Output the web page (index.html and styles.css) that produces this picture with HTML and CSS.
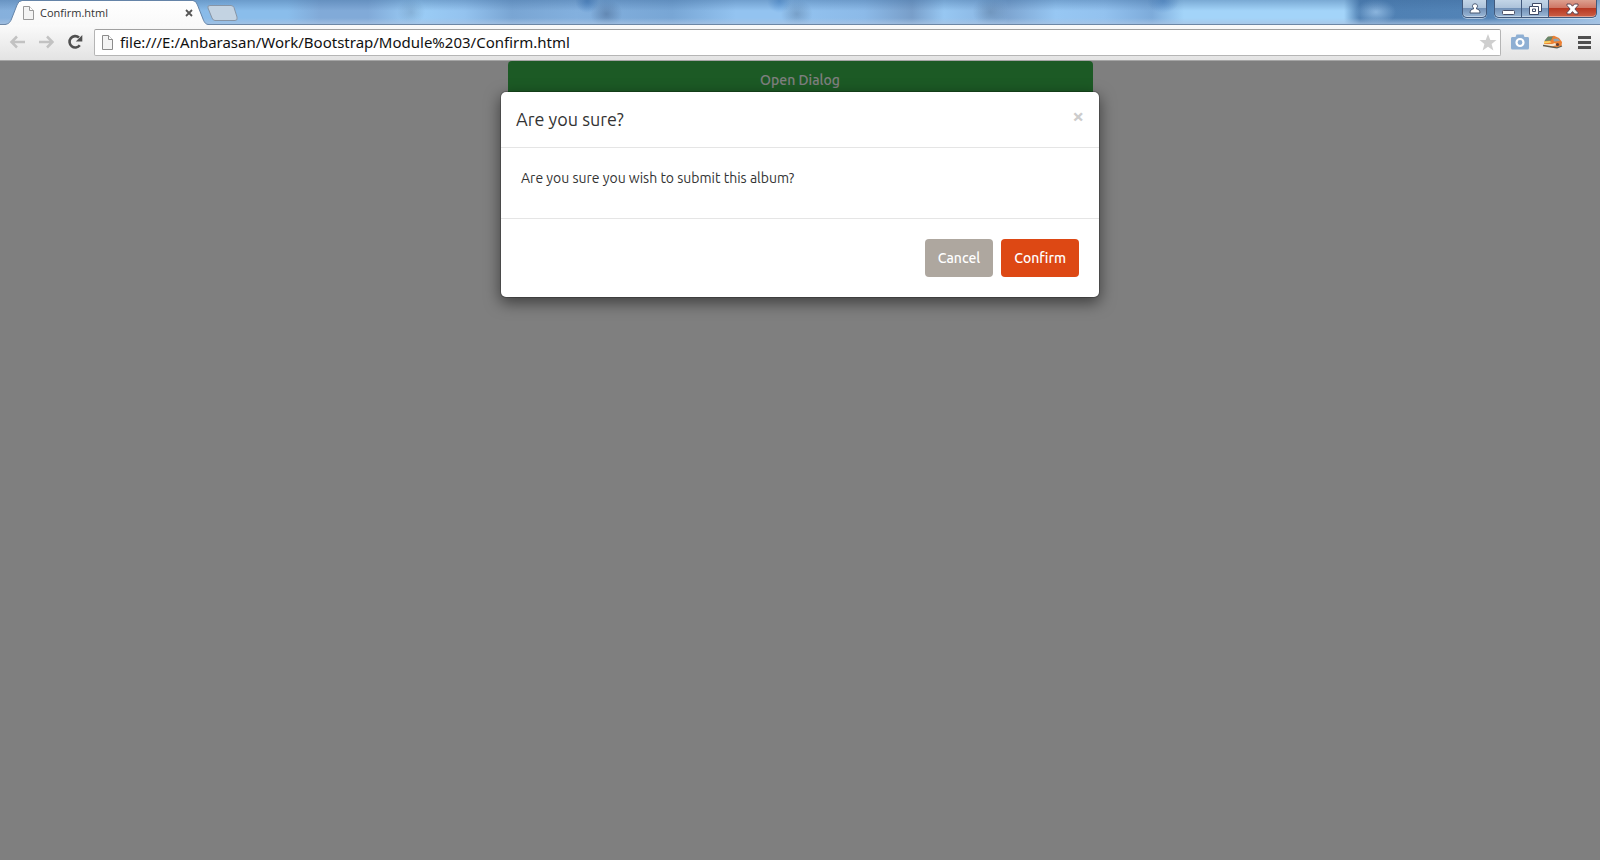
FILE: index.html
```html
<!DOCTYPE html>
<html lang="en">
<head>
<meta charset="utf-8">
<title>Confirm.html</title>
<link rel="stylesheet" href="styles.css">
</head>
<body>
<header class="browser">
  <div class="titlebar">
    <div class="tab">
      <svg class="tab-shape" viewBox="0 0 204 25" aria-hidden="true">
        <defs><linearGradient id="tabfill" x1="0" y1="0" x2="0" y2="1"><stop offset="0" stop-color="#fff"/><stop offset="1" stop-color="#f9f9f9"/></linearGradient></defs>
        <path d="M0 25 V24.500 C3 24 5 23 6.500 19 L12 5 Q13.500 1 17 1 H188 Q191 1 192.500 5 L198 19 C199.500 23 201 24.500 204 24.500 V25Z" fill="url(#tabfill)"/>
        <path d="M0 24.500 C3 24 5 23 6.500 19 L12 5 Q13.500 .5 17 .5 H188 Q191 .5 192.500 5 L198 19 C199.500 23 201 24.500 204 24.500" fill="none" stroke="#6584a8"/>
      </svg>
      <svg class="file-icon" width="11" height="14" viewBox="0 0 11 14" aria-hidden="true"><path d="M.5.500H6.500L10.500 4.500V13.500H.5Z" fill="#f4f4f4" stroke="#999"/><path d="M6.500.500V4.500H10.500" fill="#fff" stroke="#999"/></svg>
      <span class="tab-title">Confirm.html</span>
      <button class="tab-close" type="button" aria-label="Close tab"><svg width="8" height="8" viewBox="0 0 8 8"><path d="M1 1L7 7M7 1L1 7" stroke="#555" stroke-width="1.800"/></svg></button>
    </div>
    <button class="new-tab" type="button" aria-label="New tab"><svg width="31" height="16" viewBox="0 0 31 16"><path d="M3 .5H24Q26 .5 27 2.500L30 12Q31 15.500 28 15.500H8Q6 15.500 5 13L1 3Q0 .5 3 .5Z" fill="#c3d3e2" stroke="#8795a6"/></svg></button>
    <div class="window-controls">
      <button class="win-btn win-user" type="button" aria-label="User"><svg width="12" height="11" viewBox="0 0 12 11"><path d="M6 .8a2.300 2.300 0 0 1 1.500 4.200V6C9.500 6.200 11 7 11 10H1C1 7 2.500 6.200 4.500 6V5A2.300 2.300 0 0 1 6 .8Z" fill="#fff" stroke="#4a5a74"/></svg></button>
      <div class="win-group">
        <button class="win-btn win-min" type="button" aria-label="Minimize"><svg width="13" height="12" viewBox="0 0 13 12"><rect x=".5" y="7.500" width="12" height="4" rx="1" fill="#fff" stroke="#4a5068"/></svg></button>
        <button class="win-btn win-max" type="button" aria-label="Restore"><svg width="13" height="12" viewBox="0 0 13 12"><path d="M3.500.500H12.500V8.500H9.500V11.500H.5V3.500H3.500Z" fill="#fff" stroke="#3f4a66"/><path d="M3.500 3.500H9.500V8.500M3.500 6H6.500V8.500H3.500Z" fill="none" stroke="#3f4a66"/></svg></button>
        <button class="win-btn win-close" type="button" aria-label="Close"><svg width="13" height="12" viewBox="0 0 13 12"><path d="M1 1H4.500L6.500 3.200L8.500 1H12V2.500L8.900 6L12 9.500V11H8.500L6.500 8.600L4.500 11H1V9.500L4.100 6L1 2.500Z" fill="#fff" stroke="#5d4552"/></svg></button>
      </div>
    </div>
  </div>
  <div class="toolbar">
    <button class="nav-btn" type="button" aria-label="Back"><svg width="16" height="14" viewBox="0 0 16 14"><path d="M16 7H2.500M8 1.500L2.500 7L8 12.500" fill="none" stroke="#c2c2c2" stroke-width="2.500"/></svg></button>
    <button class="nav-btn" type="button" aria-label="Forward"><svg width="16" height="14" viewBox="0 0 16 14"><path d="M1 7H14.500M9 1.500L14.500 7L9 12.500" fill="none" stroke="#c2c2c2" stroke-width="2.500"/></svg></button>
    <button class="nav-btn" type="button" aria-label="Reload"><svg width="16" height="16" viewBox="0 0 16 16"><path d="M12.800 11.200A5.700 5.700 0 1 1 12 3.500" fill="none" stroke="#505050" stroke-width="2.600"/><path d="M15.300 1V7.500H8.800Z" fill="#505050"/></svg></button>
    <div class="omnibox">
      <svg class="file-icon" width="11" height="15" viewBox="0 0 11 15" aria-hidden="true"><path d="M.5.500H6.500L10.500 4.500V14.500H.5Z" fill="#f4f4f4" stroke="#8c8c8c"/><path d="M6.500.500V4.500H10.500" fill="#fff" stroke="#8c8c8c"/></svg>
      <input class="url" type="text" aria-label="Address" value="file:///E:/Anbarasan/Work/Bootstrap/Module%203/Confirm.html">
      <button class="star" type="button" aria-label="Bookmark"><svg width="18" height="17" viewBox="0 0 18 17"><path d="M9 0L11.300 6H17.500L12.600 10L14.400 16.500L9 12.800L3.600 16.500L5.400 10L.5 6H6.700Z" fill="#cfcfcf"/></svg></button>
    </div>
    <div class="extensions">
      <button class="ext-btn" type="button" aria-label="Screenshot"><svg width="18" height="16" viewBox="0 0 18 16"><path d="M1 3H4.500L5.500 .5H12.500L13.500 3H17Q18 3 18 4.500V14Q18 15.500 16.500 15.500H1.500Q0 15.500 0 14V4.500Q0 3 1 3Z" fill="#8eafd3"/><circle cx="9" cy="8.500" r="3.500" fill="#8eafd3" stroke="#fff" stroke-width="2.200"/></svg></button>
      <button class="ext-btn" type="button" aria-label="Car extension"><svg width="20" height="14" viewBox="0 0 20 14"><path d="M1 7L5 2L11 .8L16 3L19 7L18.500 11L13 12.500L1 10Z" fill="#ec8033"/><path d="M2 5L5 1.500L10 1.500L8 5.500L1.500 6Z" fill="#68866b"/><path d="M10 4L15 3.500L17 6L11 6.500Z" fill="#8ea4b2"/><path d="M1 6.500L7 6L8.500 7.500L1 8.500Z" fill="#f8d465"/><path d="M1 9L9 9L12 8L14 10L9 11.500L1 10.500Z" fill="#f4e4ce"/><path d="M0 10.500L9 12L14 12.800L19 11" fill="none" stroke="#5e5a4c" stroke-width="1.300"/><circle cx="14.500" cy="9.500" r="1.600" fill="#634238"/></svg></button>
      <button class="ext-btn" type="button" aria-label="Menu"><svg width="13" height="13" viewBox="0 0 13 13"><path d="M0 1.500H13M0 6.500H13M0 11.500H13" stroke="#505050" stroke-width="3"/></svg></button>
    </div>
  </div>
</header>
<main class="page">
  <div class="container"><button class="btn btn-open" type="button">Open Dialog</button></div>
  <div class="backdrop">
    <section class="modal" role="dialog" aria-modal="true" aria-labelledby="dialog-title">
      <div class="modal-header">
        <h4 class="modal-title" id="dialog-title">Are you sure?</h4>
        <button class="modal-close" type="button" aria-label="Close">×</button>
      </div>
      <div class="modal-body"><p class="modal-text">Are you sure you wish to submit this album?</p></div>
      <div class="modal-footer">
        <button class="btn btn-cancel" type="button">Cancel</button>
        <button class="btn btn-confirm" type="button">Confirm</button>
      </div>
    </section>
  </div>
</main>
</body>
</html>
```
FILE: styles.css
```css
* { box-sizing: border-box; }
body {
  margin: 0;
  min-height: 100vh;
  display: flex;
  flex-direction: column;
  font: 14px/20px "Ubuntu", "Noto Sans", sans-serif;
  color: #333;
}
button { border: 0; padding: 0; background: none; font: inherit; color: inherit; }
svg { display: block; }

.titlebar {
  display: flex;
  align-items: flex-start;
  height: 25px;
  padding-left: 5px;
  border-bottom: 1px solid #6d87a5;
  background:
    linear-gradient(to bottom, rgba(60, 105, 155, .4), rgba(80, 130, 180, 0) 45%, rgba(170, 195, 225, 0) 75%, rgba(170, 195, 225, .7) 100%),
    radial-gradient(14px 14px at 25.700% 12px, rgba(90, 120, 155, .3), transparent),
    radial-gradient(16px 15px at 37.900% 14px, rgba(70, 100, 140, .5), transparent),
    radial-gradient(16px 15px at 49.800% 14px, rgba(80, 110, 145, .4), transparent),
    radial-gradient(18px 16px at 61.900% 12px, rgba(80, 110, 145, .4), transparent),
    radial-gradient(12px 12px at 36.700% 1px, rgba(50, 110, 180, .6), transparent),
    radial-gradient(12px 12px at 48.700% 1px, rgba(60, 130, 205, .5), transparent),
    radial-gradient(16px 12px at 72.700% 1px, rgba(60, 120, 190, .5), transparent),
    radial-gradient(20px 13px at 86% 12px, rgba(154, 194, 232, .8), transparent),
    linear-gradient(to right, #86b0dc 0, #8abdeb 15%, #8abdeb 18%, #81aad8 20%, #81aad8 23%, #9bcdf6 26%, #94c3ef 29%, #79a5d3 32%, #83b0de 36%, #78a6d5 42%, #93c3f0 46%, #93c3f0 49%, #8cbae8 54%, #789ec9 57%, #97c7f2 59%, #8ebbe7 61%, #7da5d1 63%, #97c7f3 66%, #93c2ef 69%, #7dabda 72%, #a3d4f9 74%, #a3d4f9 84%, #4e7fb2 85%, #5384b7 93%, #9fc3e6 100%);
}
.tab {
  position: relative;
  display: flex;
  align-items: center;
  width: 204px;
  height: 25px;
  padding: 0 16px 0 18px;
}
.tab-shape { position: absolute; inset: 0; width: 100%; height: 25px; }
.file-icon, .tab-title, .tab-close { position: relative; flex: none; }
.tab-title { flex: 1; margin-left: 6px; font: 11px/16px "Segoe UI", "Open Sans", sans-serif; color: #333; }
.new-tab { margin: 5px 0 0 -2px; }
.window-controls { display: flex; gap: 7px; margin-left: auto; padding-right: 3px; }
.win-group { display: flex; }
.win-btn {
  display: flex;
  align-items: center;
  justify-content: center;
  width: 27px;
  height: 18px;
  border: 1px solid #41597c;
  border-top: 0;
  background: linear-gradient(#c3d5e7, #adc3db 45%, #7392b8 50%, #9ab7d6);
  box-shadow: inset 0 -1px 0 rgba(255, 255, 255, .4), 0 1px 0 rgba(255, 255, 255, .5);
}
.win-user { width: 25px; border-radius: 0 0 5px 5px; }
.win-min { width: 28px; border-radius: 0 0 0 5px; }
.win-max { border-left: 0; }
.win-close { width: 48px; border-left: 0; border-radius: 0 0 5px 0; background: linear-gradient(#dda08f, #cf7765 45%, #b73822 50%, #cc6046); }

.toolbar {
  display: flex;
  align-items: center;
  gap: 13px;
  height: 36px;
  padding: 0 9px 1px;
  border-bottom: 1px solid #a5a5a5;
  background: linear-gradient(#fafafa, #e3e3e3);
}
.nav-btn { flex: none; width: 16px; }
.omnibox {
  flex: 1;
  display: flex;
  align-items: center;
  height: 27px;
  margin-left: -2px;
  padding: 0 3px 0 7px;
  border: 1px solid #b5b5b5;
  border-top-color: #a0a0a0;
  border-radius: 2px;
  background: #fff;
}
.url {
  flex: 1;
  min-width: 0;
  margin-left: 7px;
  padding: 0;
  border: 0;
  outline: 0;
  background: none;
  font: 15px/22px "Segoe UI", "Noto Sans", sans-serif;
  color: #111;
}
.extensions { display: flex; align-items: center; gap: 14px; margin-left: -3px; }
.ext-btn:last-child { margin-left: 1px; }

.page { position: relative; flex: 1; background: #fff; }
.container { width: 585px; max-width: 100%; margin: 0 auto; }
.btn {
  padding: 9px 13px;
  border-radius: 4px;
  font-weight: 500;
  line-height: 20px;
  color: #fff;
}
.btn-open { display: block; width: 100%; background: #38b44a; }
.backdrop { position: absolute; inset: 0; padding: 30px 10px; background: rgba(0, 0, 0, .5); }
.modal {
  max-width: 600px;
  margin: 0 auto;
  border: 1px solid rgba(0, 0, 0, .2);
  border-radius: 6px;
  background: #fff;
  background-clip: padding-box;
  box-shadow: 0 5px 15px rgba(0, 0, 0, .5);
}
.modal-header { display: flex; align-items: flex-start; justify-content: space-between; padding: 15px; border-bottom: 1px solid #e5e5e5; }
.modal-title { margin: 0; font-size: 18px; font-weight: 400; line-height: 25px; }
.modal-close { font-size: 21px; font-weight: 700; line-height: 16px; color: #ccc; }
.modal-body { padding: 20px; }
.modal-text { margin: 0 0 10px; }
.modal-footer { display: flex; justify-content: flex-end; gap: 8px; padding: 20px; border-top: 1px solid #e5e5e5; }
.btn-cancel { background: #aea79f; }
.btn-confirm { background: #dd4814; }
```
